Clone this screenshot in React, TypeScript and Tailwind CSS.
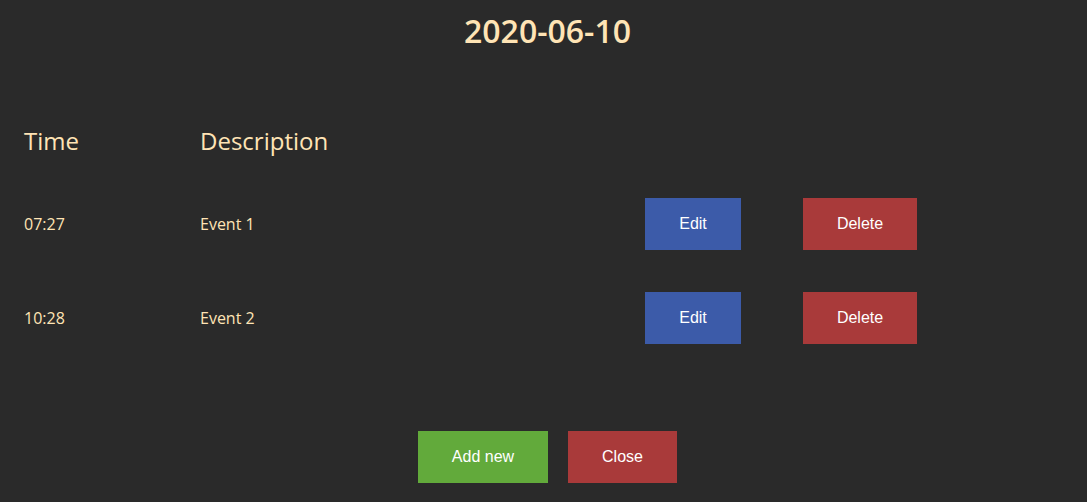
const events = [
  { time: "07:27", description: "Event 1" },
  { time: "10:28", description: "Event 2" },
];

export default function App() {
  return (
    <div className="min-h-[502px] w-full bg-[#2a2a2a] font-['Open_Sans',sans-serif] text-[#ffe4b5]">
      {/* Date heading */}
      <div className="flex h-[62px] items-center justify-center pl-2">
        <h1 className="text-[32px] font-semibold leading-none">2020-06-10</h1>
      </div>

      {/* Table header */}
      <div className="mt-[59px] grid h-[40px] grid-cols-[176px_445px_158px_1fr] items-center pl-6 text-[24px]">
        <span>Time</span>
        <span>Description</span>
        <span />
        <span />
      </div>

      {/* Rows */}
      <div className="mt-4">
        {events.map((ev) => (
          <div
            key={ev.time}
            className="grid h-[94px] grid-cols-[176px_445px_158px_1fr] items-center pl-6 text-base"
          >
            <span>{ev.time}</span>
            <span>{ev.description}</span>
            <div>
              <button className="h-[52px] w-[96px] bg-[#3c5ba9] font-['Liberation_Sans',Arial,sans-serif] text-base text-white">
                Edit
              </button>
            </div>
            <div>
              <button className="h-[52px] w-[114px] bg-[#a93a3a] font-['Liberation_Sans',Arial,sans-serif] text-base text-white">
                Delete
              </button>
            </div>
          </div>
        ))}
      </div>

      {/* Footer actions */}
      <div className="mt-[66px] flex justify-center gap-5 pb-[19px] pl-2 font-['Liberation_Sans',Arial,sans-serif] text-base text-white">
        <button className="h-[52px] w-[130px] bg-[#62aa3b]">Add new</button>
        <button className="h-[52px] w-[109px] bg-[#a93a3a]">Close</button>
      </div>
    </div>
  );
}
